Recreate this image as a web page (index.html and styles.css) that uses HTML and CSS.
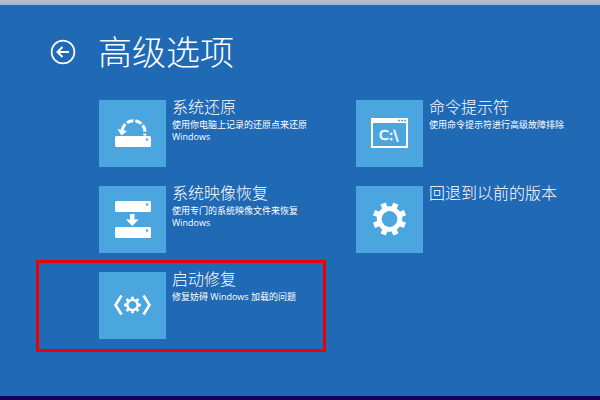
FILE: index.html
```html
<!DOCTYPE html>
<html lang="zh-CN">
<head>
    <meta charset="UTF-8">
    <meta name="viewport" content="width=device-width, initial-scale=1.0">
    <title>高级选项</title>
    <link rel="stylesheet" href="styles.css">
</head>
<body>
<svg class="defs" aria-hidden="true">
    <symbol id="gear" viewBox="-17 -17 34 34">
        <circle r="10.3" fill="none" stroke="#fff" stroke-width="4.8"/>
        <g stroke="#fff" stroke-width="5.6">
            <path id="teeth" d="M0-16.8V-10M0 10V16.8M-16.8 0H-10M10 0H16.8"/>
            <use href="#teeth" transform="rotate(45)"/>
        </g>
    </symbol>
    <symbol id="drive" viewBox="0 0 36 11">
        <rect width="36" height="11" rx="1.5" fill="#fff"/>
        <circle cx="32" cy="3.5" r="1.2" fill="#4ba6df"/>
    </symbol>
</svg>

<main class="screen">
    <header class="header">
        <button type="button" class="back" aria-label="返回">
            <svg viewBox="0 0 26 26" width="26" height="26" fill="none" stroke="#fff">
                <circle cx="13" cy="13" r="11.4" stroke-width="1.7"/>
                <path d="M19 13H8M12.5 8L7.5 13L12.5 18" stroke-width="2"/>
            </svg>
        </button>
        <h1 class="title">高级选项</h1>
    </header>

    <div class="options">
        <button type="button" class="option">
            <svg class="tile" viewBox="0 0 67 67">
                <path d="M23.2 30A11.5 11.5 0 1 1 45.5 35.5" fill="none" stroke="#fff" stroke-width="3" stroke-dasharray="6.8 2"/>
                <path d="M18.5 29L28 31L22.5 35.5Z" fill="#fff"/>
                <use href="#drive" x="16" y="36" width="36" height="11"/>
            </svg>
            <span class="text">
                <span class="name">系统还原</span>
                <span class="desc">使用你电脑上记录的还原点来还原 Windows</span>
            </span>
        </button>

        <button type="button" class="option">
            <svg class="tile" viewBox="0 0 67 67">
                <rect x="15" y="18" width="37" height="30" fill="#fff"/>
                <rect x="17" y="23" width="33" height="23" fill="#4ba6df"/>
                <path d="M42 20.5H50" stroke="#4ba6df" stroke-width="1.5" stroke-dasharray="2 1"/>
                <text class="prompt" x="23" y="40">C:\</text>
            </svg>
            <span class="text">
                <span class="name">命令提示符</span>
                <span class="desc">使用命令提示符进行高级故障排除</span>
            </span>
        </button>

        <button type="button" class="option">
            <svg class="tile" viewBox="0 0 67 67">
                <use href="#drive" x="16" y="15" width="36" height="11"/>
                <path d="M31 28H35.5V33.5H39.5L33.2 40L27 33.5H31Z" fill="#fff"/>
                <use href="#drive" x="16" y="41" width="36" height="11"/>
            </svg>
            <span class="text">
                <span class="name">系统映像恢复</span>
                <span class="desc">使用专门的系统映像文件来恢复 Windows</span>
            </span>
        </button>

        <button type="button" class="option">
            <svg class="tile" viewBox="0 0 67 67">
                <g transform="rotate(22.5 33.5 33)">
                    <use href="#gear" x="16.5" y="16" width="34" height="34"/>
                </g>
            </svg>
            <span class="text">
                <span class="name">回退到以前的版本</span>
            </span>
        </button>

        <button type="button" class="option marked">
            <svg class="tile" viewBox="0 0 67 67">
                <path d="M22.5 23.5L16.5 33L22.5 42.5M44.5 23.5L50.5 33L44.5 42.5" fill="none" stroke="#fff" stroke-width="2.6"/>
                <use href="#gear" x="25" y="24.5" width="17" height="17"/>
            </svg>
            <span class="text">
                <span class="name">启动修复</span>
                <span class="desc">修复妨碍 Windows 加载的问题</span>
            </span>
        </button>
    </div>
</main>
</body>
</html>
```
FILE: styles.css
```css
* {
    box-sizing: border-box;
}
body {
    margin: 0;
    font-family: "Open Sans", "Noto Sans CJK SC", sans-serif;
    color: #fff;
    background-color: #1f69b5;
}
.defs {
    display: none;
}
.screen {
    min-height: 100vh;
    padding: 24px 0 40px 50px;
    border-top: 3px solid #b3bccb;
    border-bottom: 4px solid #15005c;
    box-shadow: inset 0 2px #8fb9ea;
}
.header {
    display: flex;
    align-items: center;
    gap: 22px;
    height: 50px;
}
.title {
    margin: 0;
    font-size: 34px;
    font-weight: 300;
    line-height: 50px;
}
button {
    padding: 0;
    border: none;
    background: none;
    color: inherit;
    font-family: inherit;
    text-align: left;
    cursor: pointer;
}
.back {
    display: flex;
}
.options {
    display: grid;
    grid-template-columns: repeat(2, minmax(0, 239px));
    gap: 19px 18px;
    margin-top: 23px;
    padding-left: 49px;
}
.option {
    position: relative;
    display: flex;
    align-items: flex-start;
    gap: 6px;
}
.tile {
    flex: none;
    width: 67px;
    height: 67px;
    background-color: #4ba6df;
}
.prompt {
    fill: #fff;
    font-family: "DejaVu Sans", sans-serif;
    font-size: 14px;
    stroke: #fff;
    stroke-width: 0.5px;
}
.text {
    display: flex;
    flex-direction: column;
    max-width: 142px;
}
.name {
    font-size: 16px;
    font-weight: 300;
    line-height: 14px;
    white-space: nowrap;
}
.desc {
    margin-top: 5px;
    font-size: 9px;
    line-height: 12px;
}
/* 红框标出要选择的项目 */
.marked::after {
    content: "";
    position: absolute;
    top: -12px;
    right: 12px;
    bottom: -13px;
    left: -63px;
    border: 3px solid #ec0008;
}
```
